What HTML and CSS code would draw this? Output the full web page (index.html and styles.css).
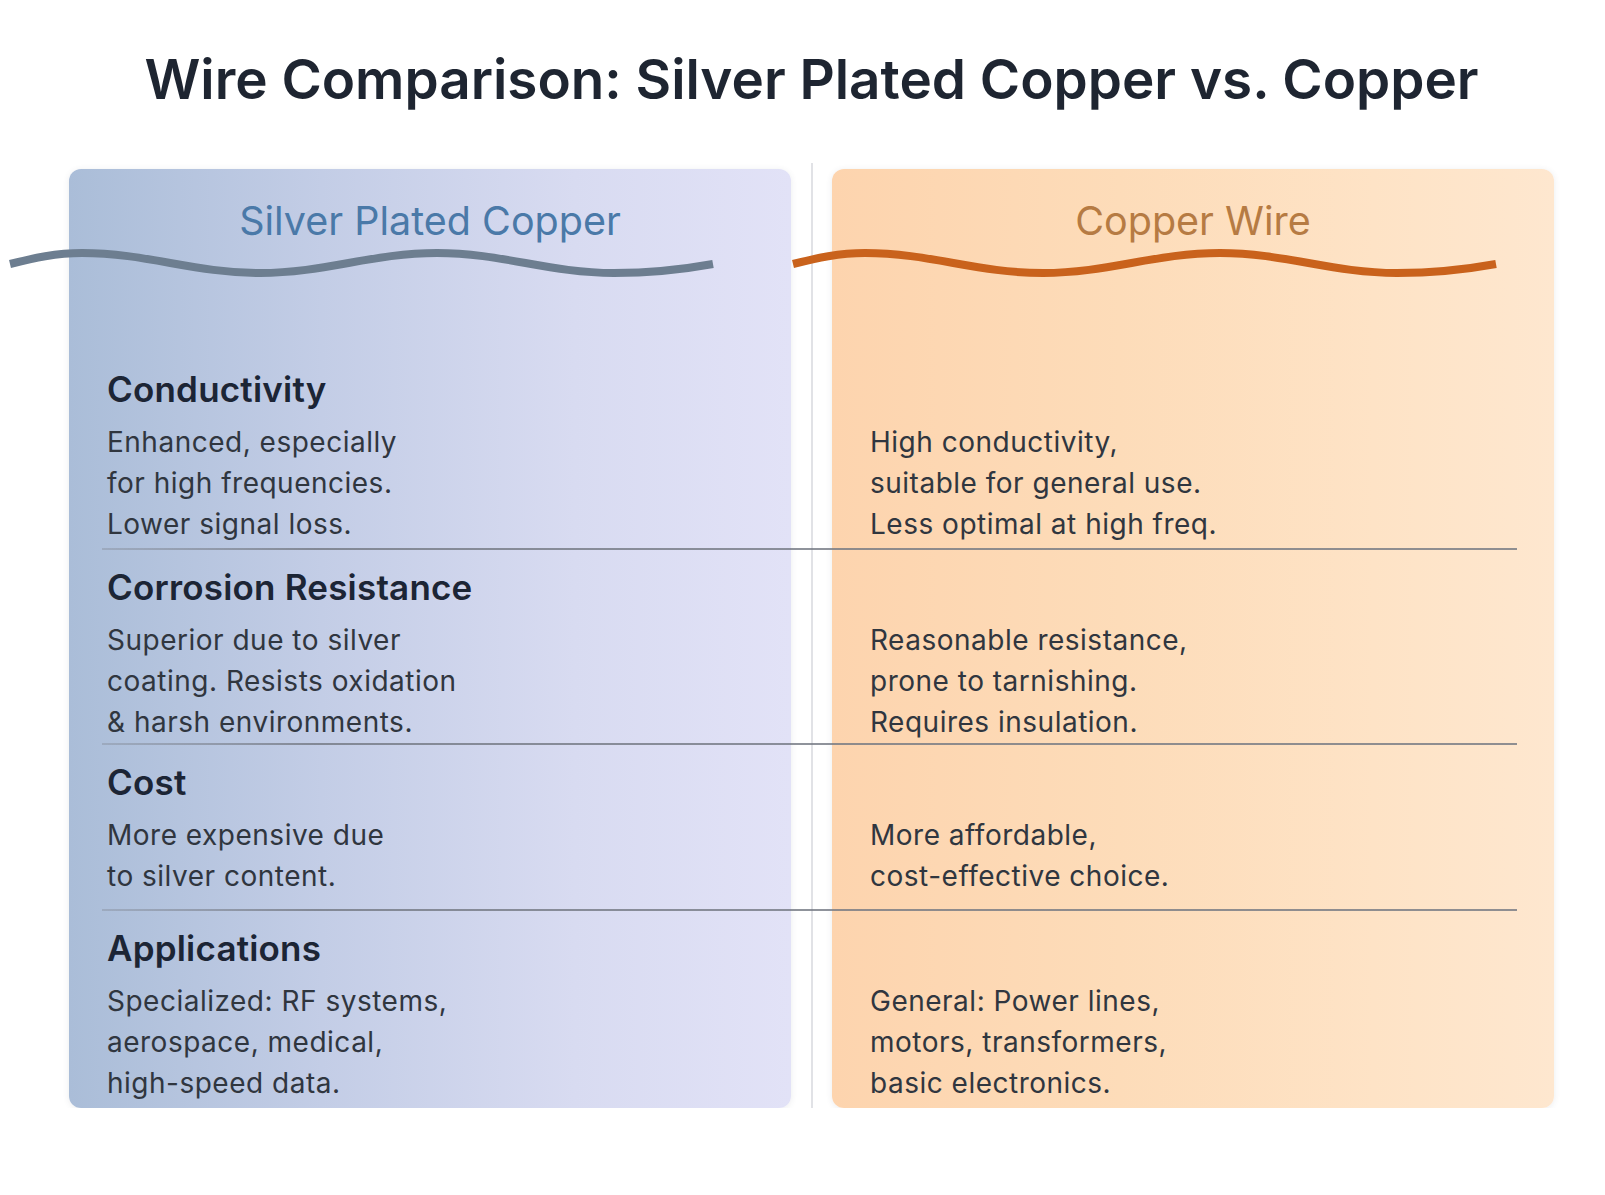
FILE: index.html
```html
<!DOCTYPE html>
<html lang="en">
<head>
<meta charset="utf-8">
<title>Wire Comparison</title>
<link rel="stylesheet" href="styles.css">
</head>
<body>
<main class="page">
  <h1 class="title">Wire Comparison: Silver Plated Copper vs. Copper</h1>
  <section class="compare">
    <div class="card card--silver"></div>
    <div class="divider"></div>
    <div class="card card--copper"></div>

    <div class="head head--silver">
      <h2 class="head-title">Silver Plated Copper</h2>
      <svg class="wave wave--silver" width="706" height="40" viewBox="0 0 706 40" aria-hidden="true">
        <path d="M2 21 C26 15 48 10 74 10 C139 10 186 30 252 30 C317 30 364 10 429 10 C494 10 541 30 606 30 C642 30 672 27 705 21" fill="none" stroke-width="8" stroke-linecap="butt"/>
      </svg>
    </div>
    <div class="head head--copper">
      <h2 class="head-title">Copper Wire</h2>
      <svg class="wave wave--copper" width="706" height="40" viewBox="0 0 706 40" aria-hidden="true">
        <path d="M2 21 C26 15 48 10 74 10 C139 10 186 30 252 30 C317 30 364 10 429 10 C494 10 541 30 606 30 C642 30 672 27 705 21" fill="none" stroke-width="8" stroke-linecap="butt"/>
      </svg>
    </div>

    <div class="cell cell--left r1">
      <h3 class="label">Conductivity</h3>
      <p class="desc">Enhanced, especially<br>for high frequencies.<br>Lower signal loss.</p>
    </div>
    <div class="cell cell--right r1">
      <p class="desc">High conductivity,<br>suitable for general use.<br>Less optimal at high freq.</p>
    </div>
    <div class="sep s1"></div>

    <div class="cell cell--left r2">
      <h3 class="label">Corrosion Resistance</h3>
      <p class="desc">Superior due to silver<br>coating. Resists oxidation<br>&amp; harsh environments.</p>
    </div>
    <div class="cell cell--right r2">
      <p class="desc">Reasonable resistance,<br>prone to tarnishing.<br>Requires insulation.</p>
    </div>
    <div class="sep s2"></div>

    <div class="cell cell--left r3">
      <h3 class="label">Cost</h3>
      <p class="desc">More expensive due<br>to silver content.</p>
    </div>
    <div class="cell cell--right r3">
      <p class="desc">More affordable,<br>cost-effective choice.</p>
    </div>
    <div class="sep s3"></div>

    <div class="cell cell--left r4">
      <h3 class="label">Applications</h3>
      <p class="desc">Specialized: RF systems,<br>aerospace, medical,<br>high-speed data.</p>
    </div>
    <div class="cell cell--right r4">
      <p class="desc">General: Power lines,<br>motors, transformers,<br>basic electronics.</p>
    </div>
  </section>
</main>
</body>
</html>
```

FILE: styles.css
```css
* { box-sizing: border-box; }

html, body {
  margin: 0;
  padding: 0;
  background: #ffffff;
}

body {
  font-family: Inter, "Noto Sans", "Liberation Sans", sans-serif;
  color: #2f3541;
}

.page {
  padding: 0 51px 0 69px;
}

.title {
  margin: 46px 0 0;
  font-size: 54.8px;
  line-height: 66px;
  font-weight: 600;
  color: #1e2531;
  text-align: center;
  letter-spacing: 0;
}

.compare {
  margin-top: 57px;
  display: grid;
  grid-template-columns: 722px 41px 722px;
  grid-template-rows: 183px 196px 2px 193px 2px 164px 2px 197px;
}

.card {
  grid-row: 1 / -1;
  border-radius: 12px;
  box-shadow: 0 1px 6px rgba(60, 70, 90, 0.10);
}

.card--silver {
  grid-column: 1;
  background: linear-gradient(90deg, #aabdd8 0%, #c3cde6 35%, #d8dbf1 70%, #e2e2f7 100%);
}

.card--copper {
  grid-column: 3;
  background: linear-gradient(90deg, #fdd4ae 0%, #fddcb9 40%, #fee3c6 75%, #fee7cf 100%);
}

.divider {
  grid-column: 2;
  grid-row: 1 / -1;
  justify-self: center;
  width: 2px;
  margin: -6px 0 -4px;
  background: #e1e2e6;
}

.head {
  grid-row: 1;
  padding-top: 28px;
  min-width: 0;
}

.head--silver { grid-column: 1; }
.head--copper { grid-column: 3; }

.head-title {
  margin: 0;
  font-size: 39.5px;
  line-height: 48px;
  font-weight: 400;
  text-align: center;
}

.head--silver .head-title { color: #4a79a8; }
.head--copper .head-title { color: #b67b43; }

.wave {
  display: block;
  margin-top: -2px;
  overflow: visible;
}

.wave--silver { margin-left: -61px; stroke: #6d7e90; }
.wave--copper { margin-left: -41px; stroke: #c9621c; }

.cell {
  padding: 15px 20px 0 38px;
}

.cell--left { grid-column: 1; }
.cell--right { grid-column: 3; padding-top: 70px; }

.r1 { grid-row: 2; }
.r2 { grid-row: 4; }
.r3 { grid-row: 6; }
.r4 { grid-row: 8; }

.label {
  margin: 0;
  font-size: 35px;
  line-height: 44px;
  font-weight: 600;
  letter-spacing: 0.2px;
  color: #1c2535;
}

.desc {
  margin: 11px 0 0;
  font-size: 28px;
  line-height: 41px;
  font-weight: 400;
  letter-spacing: 0.5px;
  color: #30363f;
}

.cell--right .desc { margin-top: 0; }

.sep {
  grid-column: 1 / -1;
  margin: 0 37px 0 33px;
  height: 2px;
  background: linear-gradient(90deg, rgba(125, 130, 140, 0.35) 0%, rgba(115, 120, 130, 0.8) 15%, rgba(115, 120, 130, 0.8) 100%);
}

.s1 { grid-row: 3; }
.s2 { grid-row: 5; }
.s3 { grid-row: 7; }
```
